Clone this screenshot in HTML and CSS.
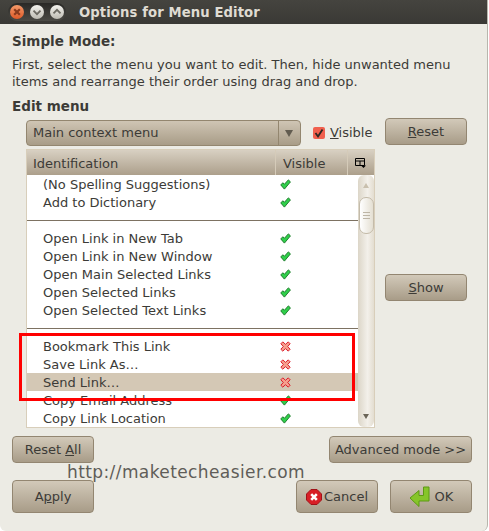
FILE: index.html
```html
<!DOCTYPE html>
<html lang="en">
<head>
<meta charset="utf-8">
<title>Options for Menu Editor</title>
<link rel="stylesheet" href="styles.css">
</head>
<body>
<svg class="defs" width="0" height="0" aria-hidden="true">
  <symbol id="yes" viewBox="0 0 10 10">
    <path d="M0.7 5.4 L2.6 3.4 L4 4.8 L7.6 0.8 L9.5 2.6 L4 9.2 Z" fill="#2fd04a" stroke="#1c7a2a" stroke-width="0.9"/>
  </symbol>
  <symbol id="no" viewBox="0 0 10 10">
    <path d="M0.8 2.5 L2.5 0.8 L5 3 L7.5 0.8 L9.2 2.5 L7 5 L9.2 7.5 L7.5 9.2 L5 7 L2.5 9.2 L0.8 7.5 L3 5 Z" fill="#f5a08e" stroke="#dc1c28" stroke-width="0.9"/>
  </symbol>
</svg>
<div class="window">
  <header class="titlebar">
    <div class="controls">
      <span class="ctl ctl-close"><svg viewBox="0 0 10 10"><path d="M3 3 L7 7 M7 3 L3 7" stroke="#8a3a1c" stroke-width="1.5"/></svg></span>
      <span class="ctl"><svg viewBox="0 0 10 10"><path d="M2.5 4 L5 6.5 L7.5 4" fill="none" stroke="#6c6a62" stroke-width="1.3"/></svg></span>
      <span class="ctl"><svg viewBox="0 0 10 10"><path d="M2.5 6 L5 3.5 L7.5 6" fill="none" stroke="#6c6a62" stroke-width="1.3"/></svg></span>
    </div>
    <div class="title">Options for Menu Editor</div>
  </header>
  <main class="content">
    <h2 class="heading">Simple Mode:</h2>
    <p class="intro">First, select the menu you want to edit. Then, hide unwanted menu<br>items and rearrange their order using drag and drop.</p>
    <h2 class="heading heading-edit">Edit menu</h2>
    <div class="editor">
      <div class="left-col">
        <div class="picker">
          <div class="combo"><span class="combo-label">Main context menu</span><span class="combo-arrow"></span></div>
          <label class="check"><span class="checkbox"><svg viewBox="0 0 12 12"><path d="M2.5 6 L5 9.5 L9.5 2.5" fill="none" stroke="#2b2722" stroke-width="1.8"/></svg></span><span><u>V</u>isible</span></label>
        </div>
        <div class="table">
          <div class="thead">
            <span class="th th-id">Identification</span>
            <span class="th th-vis">Visible</span>
            <span class="th th-cfg"><svg viewBox="0 0 11 10" width="11" height="10"><path d="M0.5 0.5 H9.5 V7.5 H0.5 Z M0.5 3 H9.5 M5 3 V7.5" fill="none" stroke="#000" stroke-width="1"/><path d="M6 7.5 H11 L8.5 10 Z" fill="#000"/></svg></span>
          </div>
          <div class="tbody">
            <div class="rows">
              <div class="row"><span class="name">(No Spelling Suggestions)</span><svg class="mark"><use href="#yes"/></svg></div>
              <div class="row"><span class="name">Add to Dictionary</span><svg class="mark"><use href="#yes"/></svg></div>
              <div class="sep"></div>
              <div class="row"><span class="name">Open Link in New Tab</span><svg class="mark"><use href="#yes"/></svg></div>
              <div class="row"><span class="name">Open Link in New Window</span><svg class="mark"><use href="#yes"/></svg></div>
              <div class="row"><span class="name">Open Main Selected Links</span><svg class="mark"><use href="#yes"/></svg></div>
              <div class="row"><span class="name">Open Selected Links</span><svg class="mark"><use href="#yes"/></svg></div>
              <div class="row"><span class="name">Open Selected Text Links</span><svg class="mark"><use href="#yes"/></svg></div>
              <div class="sep"></div>
              <div class="row"><span class="name">Bookmark This Link</span><svg class="mark"><use href="#no"/></svg></div>
              <div class="row"><span class="name">Save Link As…</span><svg class="mark"><use href="#no"/></svg></div>
              <div class="row row-selected"><span class="name">Send Link…</span><svg class="mark"><use href="#no"/></svg></div>
              <div class="row"><span class="name">Copy Email Address</span><svg class="mark"><use href="#yes"/></svg></div>
              <div class="row"><span class="name">Copy Link Location</span><svg class="mark"><use href="#yes"/></svg></div>
            </div>
            <div class="scrollbar">
              <span class="arrow-up"></span>
              <span class="thumb"><i></i><i></i><i></i></span>
              <span class="arrow-down"></span>
            </div>
          </div>
        </div>
      </div>
      <div class="right-col">
        <button class="btn btn-side btn-reset" type="button"><span><u>R</u>eset</span></button>
        <button class="btn btn-side btn-show" type="button"><span><u>S</u>how</span></button>
      </div>
    </div>
    <div class="row-actions">
      <button class="btn btn-side" type="button"><span>Reset <u>A</u>ll</span></button>
      <button class="btn btn-adv" type="button">Advanced mode &gt;&gt;</button>
    </div>
    <div class="row-dialog">
      <button class="btn btn-tall btn-side" type="button"><span>A<u>p</u>ply</span></button>
      <div class="dialog-right">
        <button class="btn btn-tall btn-side btn-icon" type="button"><svg viewBox="0 0 16 16" width="16" height="16"><path d="M5 0.5 H11 L15.5 5 V11 L11 15.5 H5 L0.5 11 V5 Z" fill="#d81f26" stroke="#a01218"/><path d="M5.2 5.2 L10.8 10.8 M10.8 5.2 L5.2 10.8" stroke="#fff" stroke-width="2.6"/></svg>Cancel</button>
        <button class="btn btn-tall btn-side btn-icon btn-ok" type="button"><svg viewBox="0 0 22 22" width="22" height="22"><path d="M14.5 1 H20 V15 H10 V20.5 L1 12 L10 4.5 V9.5 H14.5 Z" fill="#86c52a" stroke="#5d9a14"/></svg>OK</button>
      </div>
    </div>
  </main>
  <div class="redbox"></div>
  <div class="watermark">http://maketecheasier.com</div>
</div>
</body>
</html>
```
FILE: styles.css
```css
* { box-sizing: border-box; }
html, body { margin: 0; padding: 0; }
body { width: 489px; height: 531px; background: #fff; overflow: hidden; font-family: "DejaVu Sans", sans-serif; font-size: 13px; color: #3c3b37; }
.defs { position: absolute; }
.window { position: relative; width: 488px; height: 531px; background: #ecebe4; border-right: 1px solid #b8b6ac; border-radius: 0 0 6px 6px; overflow: hidden; }
.titlebar { height: 24px; display: flex; align-items: center; background: linear-gradient(#45443f, #3a3935); color: #dfdbd2; }
.controls { display: flex; gap: 6px; align-items: center; height: 18px; margin-left: 8px; padding: 0 2px; background: linear-gradient(#2a2926, #4b4a45); border-radius: 9px; }
.ctl { width: 14px; height: 14px; border-radius: 50%; background: linear-gradient(#f4f3ee, #bdbbb2); display: block; }
.ctl svg { display: block; width: 14px; height: 14px; }
.ctl-close { background: linear-gradient(#f39a6a, #df5a28); }
.title { margin-left: 13px; font-weight: bold; font-size: 13.2px; letter-spacing: 0.1px; }
.content { padding: 9px 0 0 12px; }
.heading { margin: 0; font-size: 13.5px; line-height: 17px; font-weight: bold; }
.intro { margin: 6px 0 0; line-height: 17px; font-size: 13px; }
.heading-edit { margin-top: 8px; }
.editor { display: flex; margin-top: 4px; height: 309px; padding-left: 14px; }
.left-col { width: 349px; }
.picker { display: flex; align-items: center; height: 27px; }
.combo { width: 275px; height: 26px; display: flex; border: 1px solid #93866f; border-radius: 4px; background: linear-gradient(#cfc5b4, #a89c87); }
.combo-label { flex: 1; padding: 0 6px; line-height: 24px; }
.combo-arrow { width: 22px; border-left: 1px solid #93866f; position: relative; }
.combo-arrow::after { content: ""; position: absolute; left: 6px; top: 9px; border: 4px solid transparent; border-top: 7px solid #625c50; border-bottom: 0; }
.check { display: flex; align-items: center; margin-left: 12px; gap: 5px; }
.checkbox { width: 12px; height: 12px; background: #f0604e; border-radius: 2px; display: block; }
.checkbox svg { display: block; width: 12px; height: 12px; }
.table { margin-top: 3px; height: 279px; border: 1px solid #d8ceba; border-top: 0; display: flex; flex-direction: column; }
.thead { display: flex; height: 26px; background: linear-gradient(#d8d0c2, #ac9f8b); flex: none; line-height: 27px; border-top: 1px solid #d8ceba; }
.th { display: block; padding-left: 6px; border-right: 1px solid #d5cbb9; }
.th-id { width: 249px; }
.th-vis { width: 72px; padding-left: 7px; }
.th-cfg { flex: 1; border-right: 0; display: flex; align-items: center; padding-left: 7px; }
.tbody { flex: 1; display: flex; background: #fff; min-height: 0; overflow: hidden; }
.rows { flex: 1; }
.row { display: flex; align-items: center; height: 18px; }
.row-selected { background: #d4c8b5; }
.name { width: 253px; padding: 1px 0 0 16px; white-space: nowrap; }
.mark { width: 11px; height: 11px; margin-top: 1px; }
.sep { height: 18px; display: flex; align-items: center; }
.sep::after { content: ""; display: block; width: 100%; height: 1px; background: #7d7262; }
.scrollbar { width: 16px; flex: none; background: linear-gradient(90deg, #dcd6c8, #f3f0ea 60%, #e3ddd0); border-radius: 6px; display: flex; flex-direction: column; align-items: center; }
.arrow-up { margin-top: 8px; border: 3px solid transparent; border-bottom: 5px solid #c9c0ae; border-top: 0; }
.thumb { width: 15px; height: 37px; margin-top: 9px; background: linear-gradient(90deg, #fff, #e4dfd2); border: 1px solid #c4bba9; border-radius: 7px; display: flex; flex-direction: column; justify-content: center; align-items: center; gap: 2px; }
.thumb i { display: block; width: 7px; height: 1px; background: #bdb5a5; }
.arrow-down { margin-top: auto; margin-bottom: 8px; border: 3px solid transparent; border-top: 5px solid #6b6558; border-bottom: 0; }
.right-col { display: flex; flex-direction: column; padding-left: 10px; }
.btn { font: inherit; color: #3c3b37; height: 27px; border: 1px solid #938671; border-radius: 4px; background: linear-gradient(#d2c9b9, #a89c88); padding: 0; display: flex; align-items: center; justify-content: center; }
.btn-side { width: 82px; }
.btn-reset { margin-top: -1px; }
.btn-show { margin-top: 129px; }
.row-actions { display: flex; justify-content: space-between; width: 460px; margin-top: 8px; }
.btn-adv { width: 143px; }
.row-dialog { display: flex; justify-content: space-between; width: 460px; margin-top: 17px; }
.btn-tall { height: 33px; }
.dialog-right { display: flex; gap: 12px; }
.btn-icon { gap: 2px; }
.btn-ok { gap: 4px; }
.redbox { position: absolute; left: 19px; top: 333px; width: 336px; height: 68px; border: 3px solid #ff0000; }
.watermark { position: absolute; left: 67px; top: 462px; font-size: 17px; letter-spacing: 0.4px; color: #5f5d58; }
```
